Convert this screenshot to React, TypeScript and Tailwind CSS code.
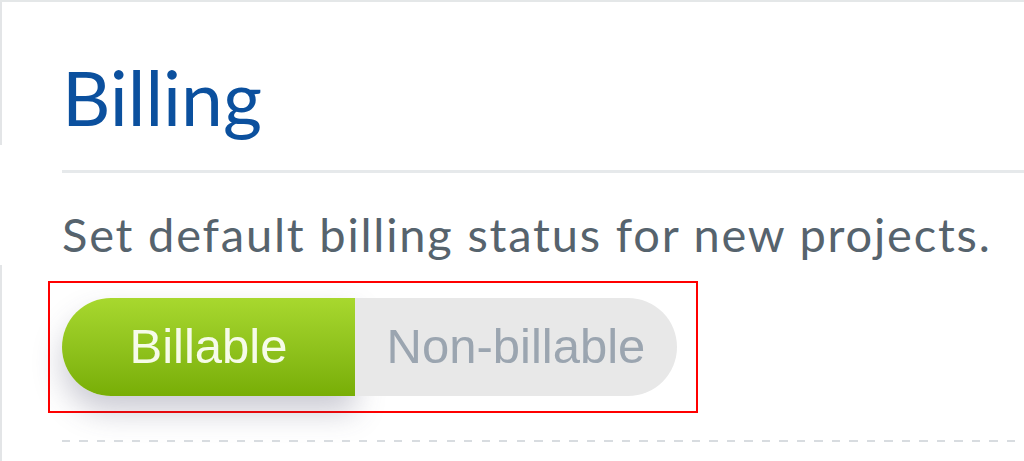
export default function App() {
  return (
    <div className="w-[1024px] h-[461px] bg-white border-t-2 border-[#e4e7e8] flex overflow-hidden">
      {/* left edge of the outer panel, broken in the middle */}
      <div className="w-[2px] shrink-0 flex flex-col">
        <div className="h-[143px] bg-[#e3e5e7]" />
        <div className="h-[120px]" />
        <div className="flex-1 bg-[#e3e5e7]" />
      </div>

      <div className="flex-1 pl-[60px] flex flex-col font-['Lato',sans-serif]">
        <h2 className="mt-[58px] text-[75px] leading-none text-[#0b509e]">Billing</h2>
        <div className="mt-[35px] h-[3px] bg-[#e6e9eb]" />
        <p className="mt-[38px] text-[47px] leading-none tracking-[1.8px] text-[#56636d]">
          Set default billing status for new projects.
        </p>

        <div className="mt-[23px] -ml-[14px] w-[650px] h-[132px] border-[2.5px] border-[#ff0000] pt-[15px] pl-[12px]">
          <div className="flex w-[615px] h-[98px] font-['Liberation_Sans',Arial,sans-serif] text-[49px]">
            <button className="w-[293px] rounded-l-full bg-gradient-to-b from-[#a8d82e] to-[#78ae05] text-[#f6fbe9] shadow-[0_16px_30px_rgba(70,70,100,0.28)]">
              Billable
            </button>
            <button className="flex-1 rounded-r-full bg-[#e8e8e8] text-[#9ba5b0]">Non-billable</button>
          </div>
        </div>

        <div className="mt-[27px] h-[2px] bg-[repeating-linear-gradient(90deg,#d8dce0_0_8px,transparent_8px_17.5px)]" />
      </div>
    </div>
  );
}
